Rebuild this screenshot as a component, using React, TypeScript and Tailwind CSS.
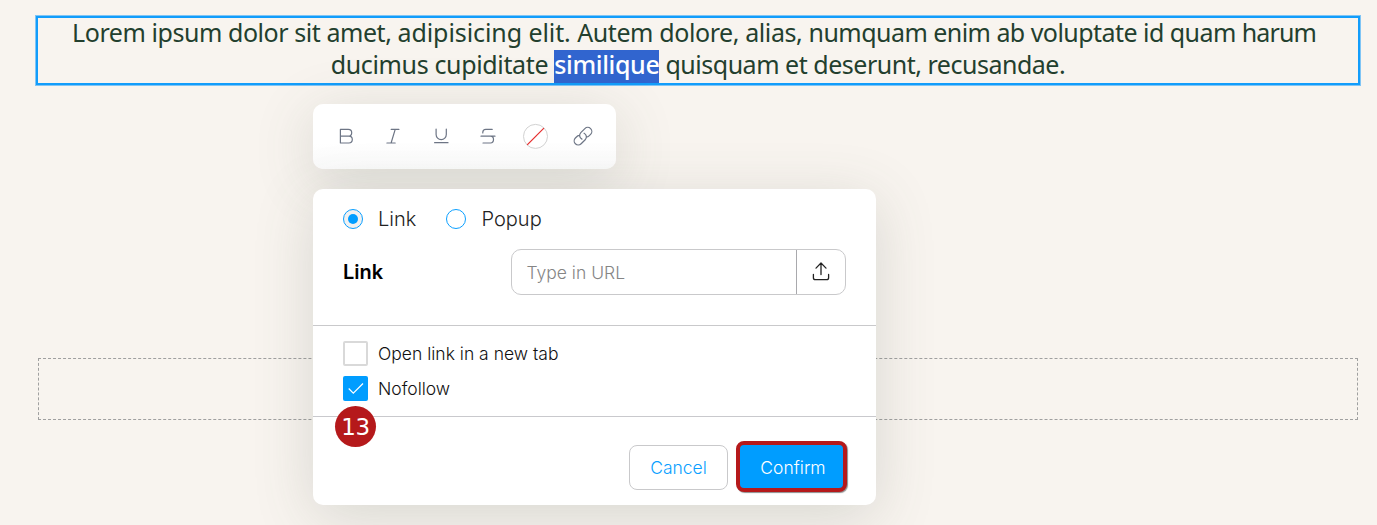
import type { ReactNode } from "react";

const toolIcon = "h-6 w-6 fill-none stroke-[#6d7585]";

function Tool({ label, children }: { label: string; children: ReactNode }) {
  return (
    <button aria-label={label} className="flex h-7 w-7 items-center justify-center">
      {children}
    </button>
  );
}

function Toolbar() {
  return (
    <div className="flex h-[65px] w-[303px] items-center justify-between rounded-[10px] bg-linear-to-b from-white from-60% to-[#fafafa] pr-[19px] pb-px pl-[19px] shadow-[0_12px_60px_rgba(80,90,80,0.19)]">
      <Tool label="Bold">
        <svg viewBox="0 0 24 24" className={toolIcon} strokeWidth="1.2" strokeLinejoin="round">
          <path d="M6.4 5.4H14.3A3.4 3.4 0 0 1 14.3 12.2H6.4ZM6.4 12.2H14.9A3.4 3.4 0 0 1 14.9 19H6.4Z" />
        </svg>
      </Tool>
      <Tool label="Italic">
        <svg viewBox="0 0 24 24" className={toolIcon} strokeWidth="1.2" strokeLinecap="round">
          <path d="M10.2 5.4H17.9M5.9 19H14.2M14.2 5.4L10.1 19" />
        </svg>
      </Tool>
      <Tool label="Underline">
        <svg viewBox="0 0 24 24" className={toolIcon} strokeWidth="1.2" strokeLinecap="round">
          <path d="M7.1 5V10.5A5.1 5.1 0 0 0 17.3 10.5V5M5.6 18.7H19" />
        </svg>
      </Tool>
      <Tool label="Strikethrough">
        <svg viewBox="0 0 24 24" className={toolIcon} strokeWidth="1.2" strokeLinecap="round">
          <path d="M16.2 5.4H9.8Q6.8 5.4 6.8 8.3V9M5 12.2H19M14.5 12.2Q17.5 12.2 17.5 15.6T14.5 19H7" />
        </svg>
      </Tool>
      <Tool label="Text color">
        <svg viewBox="0 0 28 28" className="h-7 w-7 shrink-0 fill-white">
          <circle cx="13.5" cy="14.4" r="12" stroke="#d2d2d2" />
          <path d="M5.2 22.8L21.9 6.1" stroke="#e52c2c" strokeWidth="1.2" />
        </svg>
      </Tool>
      <Tool label="Insert link">
        <svg viewBox="-1.3 -1.5 26.6 26.6" className={toolIcon} strokeWidth="1.35" strokeLinecap="round" strokeLinejoin="round">
          <path d="M13.19 8.688a4.5 4.5 0 0 1 1.242 7.244l-4.5 4.5a4.5 4.5 0 0 1-6.364-6.364l1.757-1.757m13.35-.622 1.757-1.757a4.5 4.5 0 0 0-6.364-6.364l-4.5 4.5a4.5 4.5 0 0 0 1.242 7.244M5.325 12.311Q6.8 10.9 8.3 11.2M18.675 11.689Q17.2 13.1 15.7 12.8" />
        </svg>
      </Tool>
    </div>
  );
}

function LinkDialog() {
  return (
    <div className="mt-5 flex h-[316px] w-[563px] flex-col rounded-[10px] bg-white shadow-[0_12px_60px_rgba(80,90,80,0.19)]">
      <div className="flex h-[137px] shrink-0 flex-col border-b border-[#c9c9cb] px-[30px] pt-5">
        <div className="flex h-5 items-center text-[20px] leading-5 font-light text-[#222]">
          <span className="flex h-5 w-5 items-center justify-center rounded-full border border-[#0a9fff] bg-[#f1f1f1]">
            <span className="h-[10px] w-[10px] rounded-full bg-[#009dff]" />
          </span>
          <span className="ml-[15px] w-[68px]">Link</span>
          <span className="h-5 w-5 rounded-full border border-[#0a9fff]" />
          <span className="ml-[15.5px]">Popup</span>
        </div>
        <div className="mt-5 flex h-[46px] items-center justify-between">
          <span className="pb-px text-[20px] font-semibold text-black">Link</span>
          <div className="flex h-[46px] w-[335px] rounded-[10px] border border-[#c9c9cb]">
            <span className="flex grow items-center pt-[3px] pl-[14.5px] text-[17.5px] font-light text-[#858585]">Type in URL</span>
            <span className="flex w-[49px] items-center justify-center border-l border-[#a9a9ad]">
              <svg viewBox="0 0 24 24" className="h-6 w-6 fill-none stroke-[#222]" strokeWidth="1.3" strokeLinecap="round" strokeLinejoin="round">
                <path d="M12 14.5V3.2M7 8.1L12 3L17 8.1M4.4 14.5V17.7Q4.4 19.7 6.4 19.7H17.6Q19.6 19.7 19.6 17.7V14.5" />
              </svg>
            </span>
          </div>
        </div>
      </div>
      <div className="flex h-[91px] shrink-0 flex-col gap-[10px] border-b border-[#c9c9cd] px-[30px] pt-[15px] text-[17.5px] leading-[25px] font-light text-[#111]">
        <div className="flex gap-[10px]">
          <span className="h-[25px] w-[25px] rounded-[2px] border-2 border-[#d9d9d9]" />
          <span>Open link in a new tab</span>
        </div>
        <div className="flex gap-[10px]">
          <span className="flex h-[25px] w-[25px] items-center justify-center rounded-[2px] bg-[#009dff]">
            <svg viewBox="0 0 25 25" className="h-[25px] w-[25px] fill-none stroke-white" strokeWidth="1.2">
              <path d="M5.7 12.5L10.3 17.2L20 7.5" />
            </svg>
          </span>
          <span>Nofollow</span>
        </div>
      </div>
      <div className="flex items-start justify-end gap-2 pt-[24px] pr-[29px] text-[17.5px] font-light">
        <button className="mt-1 h-[45px] w-[99px] rounded-[8px] border border-[#c9c9cb] pt-px text-[#0a9fff]">Cancel</button>
        <button className="h-[51px] w-[111px] rounded-[8px] border-4 border-[#b5191b] bg-[#009dff] pt-[3px] pl-[3px] text-white shadow-[1px_1px_1px_rgba(0,0,0,0.45)]">Confirm</button>
      </div>
    </div>
  );
}

export default function App() {
  return (
    <main className="relative h-[525px] w-[1377px] overflow-hidden bg-[#f8f4ef] font-['Inter',sans-serif]">
      <div className="px-[35px] pt-[15px]">
        <div className="flex h-[71px] w-[1326px] flex-col items-center border border-[#80c5f5]">
          <div className="flex h-[69px] w-[1324px] flex-col items-center border-2 border-[#129dfb] text-[25px] leading-[29px] whitespace-pre text-[#233f2e] font-['Noto_Sans',sans-serif]">
            <div className="flex h-8 pr-2">
              <span className="tracking-[-0.44px]">Lorem ipsum dolor sit amet, </span>
              <span className="tracking-[-0.08px]">adipisicing elit. </span>
              <span className="tracking-[-0.4px]">Autem dolore, alias, </span>
              <span className="tracking-[-0.54px]">numquam enim ab voluptate id quam </span>
              <span className="tracking-[-0.9px]">harum</span>
            </div>
            <div className="flex tracking-[-0.36px]">
              <span>ducimus cupiditate </span>
              <span className="h-[33px] bg-[#3165cf] font-medium text-white">similique</span>
              <span className="tracking-[-0.48px]"> quisquam et deserunt, recusandae.</span>
            </div>
          </div>
        </div>
        <div className="mt-[272px] ml-[3px] h-[62px] w-[1320px] border border-dashed border-[#a0a0a0]" />
      </div>
      <div className="absolute top-[104px] left-[313px]">
        <Toolbar />
        <LinkDialog />
      </div>
      <span className="absolute top-[406px] left-[335px] flex h-[41px] w-[41px] items-center justify-center rounded-full bg-[#b5191b] pt-[2px] text-[23px] tracking-[-0.5px] text-white font-['DejaVu_Sans',sans-serif]">13</span>
    </main>
  );
}
